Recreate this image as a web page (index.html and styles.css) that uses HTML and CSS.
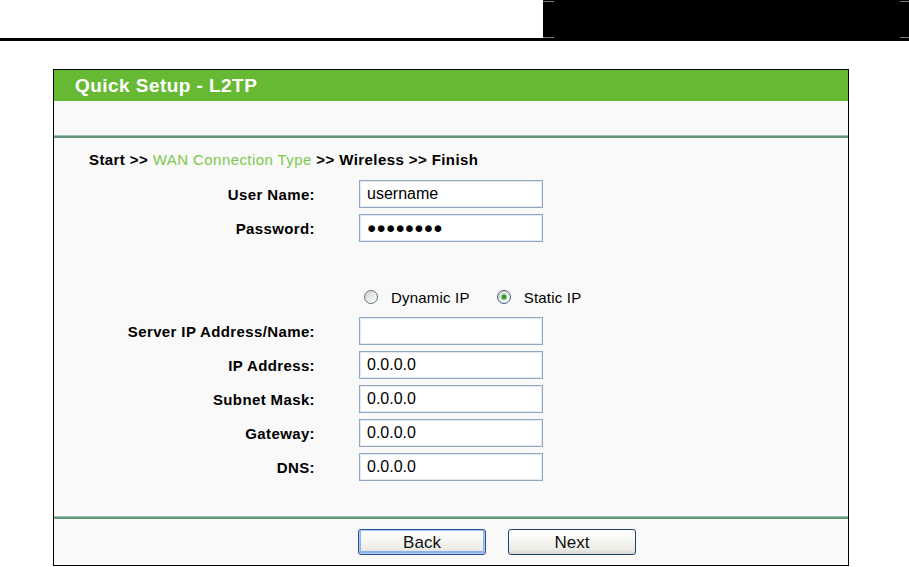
FILE: index.html
```html
<!DOCTYPE html>
<html lang="en">
<head>
<meta charset="utf-8">
<title>Quick Setup - L2TP</title>
<link rel="stylesheet" href="styles.css">
</head>
<body>
<div class="topbar">
  <div class="topbar-fill"></div>
  <div class="topbox"></div>
</div>
<div class="rule"></div>

<div class="panel">
  <div class="title">Quick Setup - L2TP</div>
  <div class="subhead"></div>
  <div class="sep"></div>
  <div class="body">
    <div class="crumbs"><b>Start &gt;&gt; </b><span class="cur">WAN Connection Type</span><b> &gt;&gt; Wireless &gt;&gt; Finish</b></div>
    <div class="form">
      <label class="lbl">User Name:</label><input class="field" type="text" value="username">
      <label class="lbl">Password:</label><input class="field pw" type="text" value="●●●●●●●●">
      <div class="radios">
        <label class="opt"><input class="radio" type="radio" name="iptype"><span>Dynamic IP</span></label>
        <label class="opt"><input class="radio" type="radio" name="iptype" checked><span>Static IP</span></label>
      </div>
      <label class="lbl">Server IP Address/Name:</label><input class="field" type="text" value="">
      <label class="lbl">IP Address:</label><input class="field" type="text" value="0.0.0.0">
      <label class="lbl">Subnet Mask:</label><input class="field" type="text" value="0.0.0.0">
      <label class="lbl">Gateway:</label><input class="field" type="text" value="0.0.0.0">
      <label class="lbl">DNS:</label><input class="field" type="text" value="0.0.0.0">
    </div>
  </div>
  <div class="sep"></div>
  <div class="actions">
    <button class="btn btn-focus" type="button">Back</button>
    <button class="btn" type="button">Next</button>
  </div>
</div>
</body>
</html>
```
FILE: styles.css
```css
html, body {
  margin: 0;
  padding: 0;
  background: #ffffff;
  font-family: "Liberation Sans", Arial, sans-serif;
  color: #000;
}

.topbar {
  display: flex;
  height: 38px;
}
.topbar-fill { flex: 1; }
.topbox {
  width: 366px;
  background: #000;
  position: relative;
}
.topbox::before,
.topbox::after {
  content: "";
  position: absolute;
  left: 0;
  right: 0;
  height: 1px;
  background: linear-gradient(to right, #7a7a7a 0 11px, transparent 11px calc(100% - 9px), #7a7a7a calc(100% - 9px));
}
.topbox::before { top: 1px; }
.topbox::after { bottom: 0; }

.rule {
  height: 3px;
  background: #000;
}

.panel {
  margin: 28px 0 0 53px;
  width: 796px;
  box-sizing: border-box;
  border: 1px solid #000;
  background: #f9f9f9;
}

.title {
  height: 31px;
  line-height: 31px;
  background: #67b934;
  color: #fff;
  font-weight: bold;
  font-size: 19px;
  padding-left: 21px;
  letter-spacing: 0.45px;
}

.subhead { height: 34px; }

.sep {
  height: 1px;
  border-bottom: 2px solid #62967a;
  background: #9cc5ad;
}

.body {
  padding: 13px 0 35px 35px;
}

.crumbs {
  font-size: 15px;
  line-height: 18px;
  letter-spacing: 0.42px;
}
.crumbs .cur {
  color: #7cc94c;
}

.form {
  margin: 11px 0 0 -35px;
  display: grid;
  grid-template-columns: 261px 184px;
  column-gap: 44px;
  row-gap: 6px;
  align-items: center;
}

.lbl {
  text-align: right;
  font-weight: bold;
  font-size: 15px;
  letter-spacing: 0.38px;
}

.field {
  box-sizing: border-box;
  width: 184px;
  height: 28px;
  margin: 0;
  border: 1px solid #90a7c4;
  box-shadow: inset 0 0 0 1px #e3e9f1;
  background: #fff;
  padding: 0 0 0 7px;
  font-family: "Liberation Sans", Arial, sans-serif;
  font-size: 16px;
  color: #000;
  outline: none;
}
.field.pw {
  font-size: 15.5px;
  letter-spacing: 0.1px;
}

.radios {
  grid-column: 2 / span 1;
  margin-top: 35px;
  height: 28px;
  display: flex;
  align-items: center;
  padding-left: 5px;
  gap: 27px;
  white-space: nowrap;
}
.opt {
  display: flex;
  align-items: center;
  gap: 13px;
  font-size: 15px;
  letter-spacing: 0.2px;
}
.radio {
  appearance: none;
  -webkit-appearance: none;
  margin: 0;
  width: 14px;
  height: 14px;
  border-radius: 50%;
  border: 1px solid #5f7488;
  background: linear-gradient(135deg, #d2d2cc, #ffffff);
  box-sizing: border-box;
}
.radio:checked {
  border-color: #3f5f7c;
  background:
    radial-gradient(circle at 50% 50%, #2f9c2f 0 2px, #8fd08f 2.6px, transparent 3.4px),
    linear-gradient(135deg, #d2d2cc, #ffffff);
}

.actions {
  display: flex;
  gap: 22px;
  padding: 10px 0 10px 304px;
}

.btn {
  width: 128px;
  height: 26px;
  box-sizing: border-box;
  margin: 0;
  padding: 1px 0 0;
  border: 1px solid #1c3f6e;
  border-radius: 3px;
  background: linear-gradient(to bottom, #ffffff 0%, #f6f6f2 45%, #ecebe5 80%, #d9d8d0 100%);
  font-family: "Liberation Sans", Arial, sans-serif;
  font-size: 17px;
  color: #111;
  line-height: 23px;
}
.btn-focus {
  border-color: #1f4f92;
  box-shadow: inset 0 0 0 1px #aecbf3, inset 0 -1px 0 2px #8fb3e6;
}
```
